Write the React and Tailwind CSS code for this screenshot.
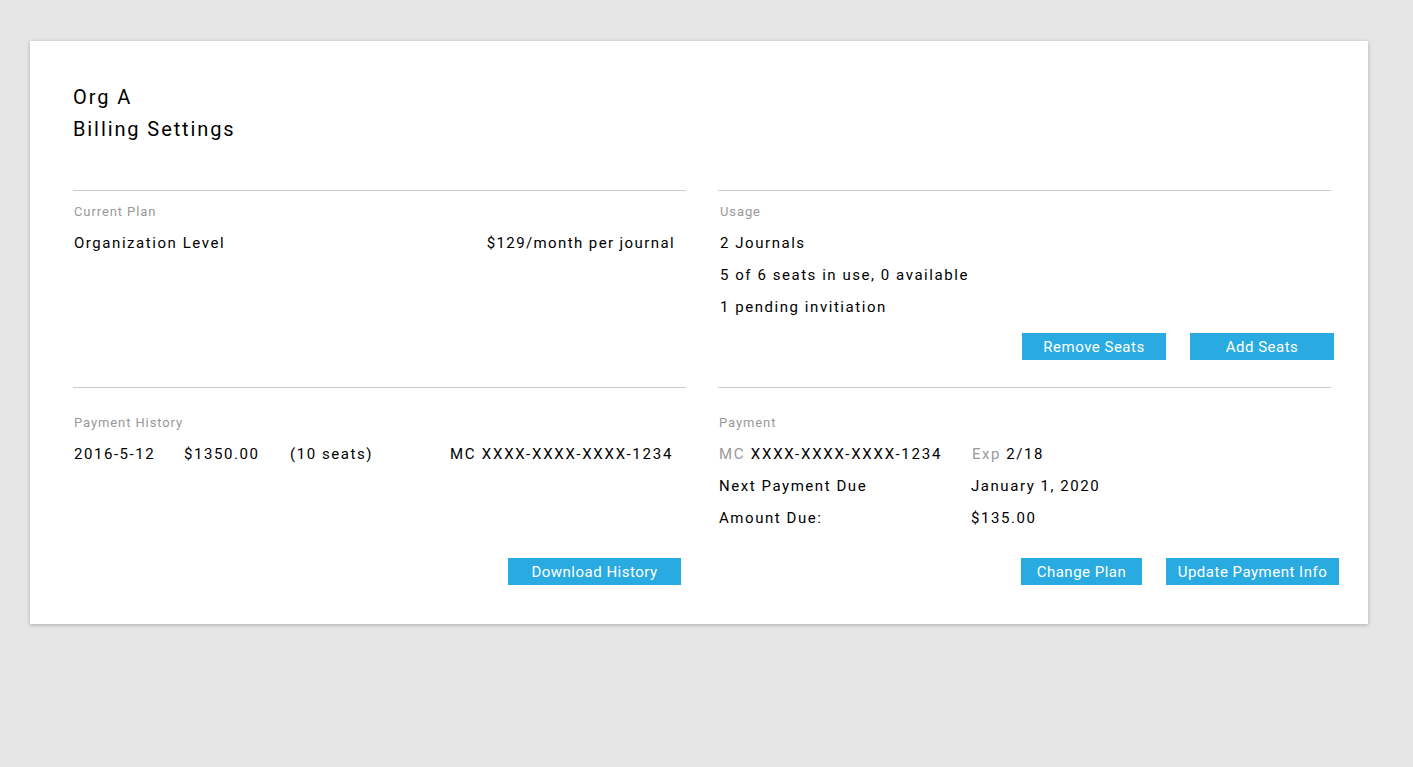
function Btn({ w, children }) {
  return (
    <div
      className={`h-[27px] bg-[#29abe2] text-white text-[15px] pt-[2px] leading-[25px] text-center tracking-[0.5px] ${w}`}
    >
      {children}
    </div>
  );
}

function Label({ children, pl = "pl-[1px]" }) {
  return (
    <div className={`text-[13px] leading-[20px] text-[#999] tracking-[0.9px] ${pl}`}>
      {children}
    </div>
  );
}

export default function App() {
  return (
    <div className="min-h-[767px] bg-[#e6e6e6] pt-[41px] pl-[30px] font-['Roboto',sans-serif]">
      <div className="w-[1338px] bg-white shadow-[0_1px_4px_rgba(0,0,0,0.25)] pl-[43px] pt-[40px] pb-[39px]">
        <div className="text-[20px] leading-[32px] tracking-[1.9px] text-black">
          <div>Org A</div>
          <div>Billing Settings</div>
        </div>

        <div className="mt-[45px] grid grid-cols-[613px_613px] gap-x-[32px] text-[15px] text-black tracking-[1.55px]">
          {/* Current Plan */}
          <div className="border-t border-[#cccccc] pt-[11px]">
            <Label>Current Plan</Label>
            <div className="mt-[5px] flex justify-between leading-[32px] pl-[1px] pr-[11px]">
              <span>Organization Level</span>
              <span className="tracking-[1.4px]">$129/month per journal</span>
            </div>
          </div>

          {/* Usage */}
          <div className="border-t border-[#cccccc] pt-[11px] pb-[27px]">
            <Label pl="pl-[2px]">Usage</Label>
            <div className="mt-[5px] leading-[32px] pl-[2px]">
              <div>2 Journals</div>
              <div>5 of 6 seats in use, 0 available</div>
              <div>1 pending invitiation</div>
            </div>
            <div className="mt-[10px] mr-[-3px] flex justify-end gap-[24px]">
              <Btn w="w-[144px]">Remove Seats</Btn>
              <Btn w="w-[144px]">Add Seats</Btn>
            </div>
          </div>

          {/* Payment History */}
          <div className="border-t border-[#cccccc] pt-[25px]">
            <Label>Payment History</Label>
            <div className="mt-[5px] h-[96px] leading-[32px] pl-[1px] flex items-start">
              <span className="w-[110px]">2016-5-12</span>
              <span className="w-[106px]">$1350.00</span>
              <span className="w-[160px]">(10 seats)</span>
              <span className="tracking-[1.75px]">MC XXXX-XXXX-XXXX-1234</span>
            </div>
            <div className="mt-[24px] mr-[5px] flex justify-end">
              <Btn w="w-[173px]">Download History</Btn>
            </div>
          </div>

          {/* Payment */}
          <div className="border-t border-[#cccccc] pt-[25px]">
            <Label>Payment</Label>
            <div className="mt-[5px] h-[96px] leading-[32px] pl-[1px]">
              <div className="flex">
                <span className="w-[253px] tracking-[1.75px]">
                  <span className="text-[#999]">MC</span> XXXX-XXXX-XXXX-1234
                </span>
                <span>
                  <span className="text-[#999]">Exp</span> 2/18
                </span>
              </div>
              <div className="flex">
                <span className="w-[252px]">Next Payment Due</span>
                <span>January 1, 2020</span>
              </div>
              <div className="flex">
                <span className="w-[252px]">Amount Due:</span>
                <span>$135.00</span>
              </div>
            </div>
            <div className="mt-[24px] mr-[-8px] flex justify-end gap-[24px]">
              <Btn w="w-[121px]">Change Plan</Btn>
              <Btn w="w-[173px]">Update Payment Info</Btn>
            </div>
          </div>
        </div>
      </div>
    </div>
  );
}
